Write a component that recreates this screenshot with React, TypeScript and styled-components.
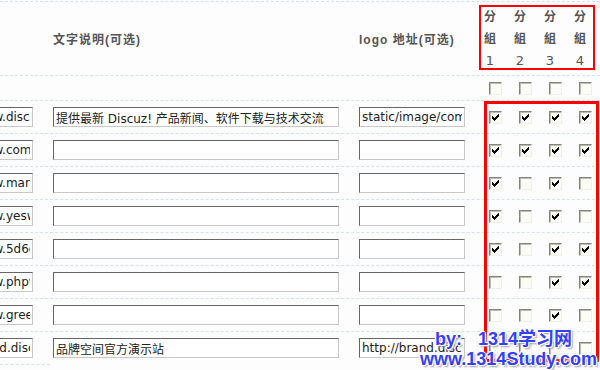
import React from "react";
import styled, { createGlobalStyle } from "styled-components";

const GlobalStyle = createGlobalStyle`
  body {
    margin: 0;
    background: #fdfdfd;
    overflow: hidden;
  }
`;

const latin = `"DejaVu Sans", "Noto Sans CJK SC", sans-serif`;
const heading = `"Liberation Sans", "Noto Sans CJK SC", sans-serif`;
const rule = "1px dashed #cfe4f5";

type Link = {
  url: string;
  indent?: number;
  note: string;
  logo: string;
  groups: boolean[];
};

const links: Link[] = [
  {
    url: "http://www.discuz.net",
    note: "提供最新 Discuz! 产品新闻、软件下载与技术交流",
    logo: "static/image/common/logo_88_31.gif",
    groups: [true, true, true, true],
  },
  { url: "http://www.comsenz.com", note: "", logo: "", groups: [true, true, true, true] },
  { url: "http://www.manyou.com", note: "", logo: "", groups: [true, false, true, false] },
  { url: "http://www.yeswan.com", note: "", logo: "", groups: [true, false, true, false] },
  { url: "http://www.5d6d.com", note: "", logo: "", groups: [true, false, true, true] },
  { url: "http://www.phpwind.net", note: "", logo: "", groups: [false, false, true, true] },
  { url: "http://www.greenbrowser.cn", note: "", logo: "", groups: [false, false, true, false] },
  {
    url: "http://brand.discuz.net",
    indent: -2,
    note: "品牌空间官方演示站",
    logo: "http://brand.discuz.net/logo.gif",
    groups: [false, false, false, false],
  },
];

const Page = styled.div`
  position: relative;
  width: 600px;
  height: 370px;
  padding-top: 1px;
  box-sizing: border-box;
  overflow: hidden;
`;

const Row = styled.div<{ $height: number }>`
  display: flex;
  align-items: center;
  height: ${(p) => p.$height}px;
  border-top: ${rule};
`;

const TailRule = styled.div`
  width: 50px;
  border-top: ${rule};
`;

const UrlCell = styled.div`
  width: 53px;
  flex: none;
  box-sizing: border-box;
  padding-right: 20px;
  display: flex;
  justify-content: flex-end;
  overflow: hidden;
`;

const Cell = styled.div<{ $width: number }>`
  width: ${(p) => p.$width}px;
  flex: none;
  display: flex;
  align-items: center;
`;

const Title = styled.span`
  font: bold 12px ${heading};
  letter-spacing: 1px;
  color: #555;
  white-space: nowrap;
`;

const GroupHead = styled.div`
  width: 30px;
  flex: none;
  box-sizing: border-box;
  padding-left: 4px;
`;

const GroupLabel = styled.div`
  width: 12px;
  text-align: center;
  font: bold 12px/22px ${heading};
  color: #555;
`;

const GroupNumber = styled.div`
  width: 12px;
  text-align: center;
  font: 13px/22px ${latin};
  color: #555;
`;

const TextField = styled.input<{ $width: number; $indent?: number }>`
  width: ${(p) => p.$width}px;
  height: 20px;
  flex: none;
  box-sizing: border-box;
  margin: 0;
  padding: 0 2px;
  border: 1px solid;
  border-color: #666 #c8c8c8 #c8c8c8 #666;
  background: #fff;
  color: #222;
  font: 12px ${latin};
  text-indent: ${(p) => p.$indent ?? 0}px;
  outline: none;
`;

const BoxCell = styled.div`
  width: 30px;
  flex: none;
  display: flex;
  justify-content: center;
`;

const Box = styled.span`
  width: 13px;
  height: 13px;
  box-sizing: border-box;
  display: flex;
  align-items: center;
  justify-content: center;
  border: 1px solid;
  border-color: #85847a #f1f0e8 #f1f0e8 #85847a;
  box-shadow: inset 1px 1px 0 #bdbcb0;
  background: #fcfcf6;
`;

const Annotation = styled.div<{
  $left: number;
  $top: number;
  $width: number;
  $height: number;
  $stroke: number;
}>`
  position: absolute;
  left: ${(p) => p.$left}px;
  top: ${(p) => p.$top}px;
  width: ${(p) => p.$width}px;
  height: ${(p) => p.$height}px;
  box-sizing: border-box;
  border: ${(p) => p.$stroke}px solid #ff0000;
  pointer-events: none;
`;

const Watermark = styled.div`
  position: absolute;
  left: 420px;
  top: 329px;
  font: bold 18px/20px "Liberation Sans", "Noto Sans CJK SC", sans-serif;
  color: #3440f4;
  white-space: nowrap;
  text-shadow: 1px 0 0 #fff, -1px 0 0 #fff, 0 1px 0 #fff, 0 -1px 0 #fff,
    1px 1px 0 #fff, -1px -1px 0 #fff, 2px 2px 2px #9a9aa8;
`;

const WatermarkLine = styled.div<{ $indent: number }>`
  padding-left: ${(p) => p.$indent}px;
`;

const Gap = styled.span`
  margin-left: 16px;
`;

const Check = ({ checked }: { checked: boolean }) => (
  <Box>
    {checked && (
      <svg width="9" height="9" viewBox="0 0 9 9" shapeRendering="crispEdges">
        <path
          d="M7 1h1v3h-1v1h-1v1h-1v1h-1v1h-1v-1h-1v-1h-1v-3h1v1h1v1h1v-1h1v-1h1v-1h1z"
          fill="#000"
        />
      </svg>
    )}
  </Box>
);

const App = () => {
  return (
    <Page>
      <GlobalStyle />
      <Row $height={73}>
        <UrlCell />
        <Cell $width={306}>
          <Title>文字说明(可选)</Title>
        </Cell>
        <Cell $width={121}>
          <Title>logo 地址(可选)</Title>
        </Cell>
        {[1, 2, 3, 4].map((n) => (
          <GroupHead key={n}>
            <GroupLabel>分</GroupLabel>
            <GroupLabel>組</GroupLabel>
            <GroupNumber>{n}</GroupNumber>
          </GroupHead>
        ))}
      </Row>

      <Row $height={24}>
        <UrlCell />
        <Cell $width={306} />
        <Cell $width={121} />
        {[0, 1, 2, 3].map((i) => (
          <BoxCell key={i}>
            <Check checked={false} />
          </BoxCell>
        ))}
      </Row>

      {links.map((link) => (
        <Row $height={32} key={link.url}>
          <UrlCell>
            <TextField $width={99} $indent={link.indent} defaultValue={link.url} readOnly />
          </UrlCell>
          <Cell $width={306}>
            <TextField $width={286} defaultValue={link.note} readOnly />
          </Cell>
          <Cell $width={121}>
            <TextField $width={106} defaultValue={link.logo} readOnly />
          </Cell>
          {link.groups.map((on, i) => (
            <BoxCell key={i}>
              <Check checked={on} />
            </BoxCell>
          ))}
        </Row>
      ))}
      <TailRule />

      <Annotation $left={479} $top={5} $width={116} $height={65} $stroke={2} />
      <Annotation $left={484} $top={101} $width={115} $height={261} $stroke={3} />

      <Watermark>
        <WatermarkLine $indent={15}>
          by:<Gap>1314学习网</Gap>
        </WatermarkLine>
        <WatermarkLine $indent={0}>www.1314Study.com</WatermarkLine>
      </Watermark>
    </Page>
  );
};

export default App;
